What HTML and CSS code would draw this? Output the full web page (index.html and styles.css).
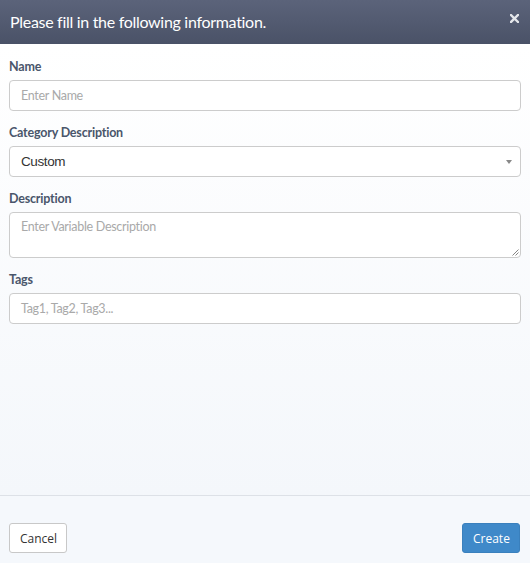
FILE: index.html
```html
<!DOCTYPE html>
<html>
<head>
<meta charset="utf-8">
<link rel="stylesheet" href="styles.css">
</head>
<body>
<div class="modal">
  <div class="header">
    <span class="title">Please fill in the following information.</span>
    <svg class="close" width="9" height="9" viewBox="0 0 9 9"><path d="M1 1L8 8M8 1L1 8" stroke="#e4e6ea" stroke-width="2.4" stroke-linecap="square"/></svg>
  </div>
  <div class="content">
    <div class="group">
      <div class="label">Name</div>
      <div class="input placeholder">Enter Name</div>
    </div>
    <div class="group">
      <div class="label">Category Description</div>
      <div class="input select"><span>Custom</span><span class="caret"></span></div>
    </div>
    <div class="group">
      <div class="label">Description</div>
      <div class="input textarea placeholder">Enter Variable Description
        <svg class="grip" width="8" height="8" viewBox="0 0 8 8"><path d="M7.5 1.5L1.5 7.5M7.5 4.5L4.5 7.5" stroke="#777" stroke-width="0.9"/></svg>
      </div>
    </div>
    <div class="group">
      <div class="label">Tags</div>
      <div class="input placeholder">Tag1, Tag2, Tag3...</div>
    </div>
  </div>
  <div class="footer">
    <button class="btn cancel">Cancel</button>
    <button class="btn create">Create</button>
  </div>
</div>
</body>
</html>
```
FILE: styles.css
```css
html, body {
  margin: 0;
  height: 100%;
}
body {
  font-family: "Lato", "Open Sans", sans-serif;
}
.modal {
  height: 100%;
  display: flex;
  flex-direction: column;
}
.header {
  height: 44px;
  flex: none;
  box-sizing: border-box;
  padding: 0 11px 0 10px;
  display: flex;
  align-items: center;
  justify-content: space-between;
  background: linear-gradient(#5b637a, #4a5267);
}
.title {
  color: #fff;
  font-size: 16px;
  letter-spacing: -0.3px;
  position: relative;
  top: -1px;
}
.close {
  position: relative;
  top: -4px;
}
.content {
  flex: 1;
  padding: 16px 9px 0 9px;
  background: linear-gradient(#ffffff, #f4f7fb);
}
.group {
  margin-bottom: 15px;
}
.label {
  font-size: 12.5px;
  letter-spacing: -0.2px;
  line-height: 16px;
  font-weight: bold;
  color: #4a566b;
  margin-bottom: 4px;
  position: relative;
  top: -1px;
}
.input {
  box-sizing: border-box;
  height: 31px;
  border: 1px solid #cccccc;
  border-radius: 4px;
  background: #fff;
  padding: 0 11px;
  display: flex;
  align-items: center;
  font-size: 12.5px;
  letter-spacing: -0.3px;
}
.placeholder {
  color: #a9a9a9;
}
.select {
  font-family: "Liberation Sans", Arial, sans-serif;
  font-size: 13.5px;
  letter-spacing: -0.4px;
  color: #333;
  justify-content: space-between;
  padding-right: 8px;
}
.caret {
  width: 0;
  height: 0;
  border-left: 3px solid transparent;
  border-right: 3px solid transparent;
  border-top: 4px solid #888;
  margin-top: 1px;
}
.textarea {
  height: 46px;
  align-items: flex-start;
  padding-top: 6px;
  position: relative;
}
.grip {
  position: absolute;
  right: 1px;
  bottom: 1px;
}
.footer {
  flex: none;
  height: 68px;
  box-sizing: border-box;
  border-top: 1px solid #dde1e7;
  background: #f5f8fc;
  padding: 27px 9px 0 9px;
  display: flex;
  justify-content: space-between;
  align-items: flex-start;
}
.btn {
  height: 30px;
  box-sizing: border-box;
  border-radius: 3px;
  font-family: "Open Sans", sans-serif;
  font-size: 12px;
  padding: 0 10px;
}
.cancel {
  width: 58px;
  background: #fff;
  border: 1px solid #c8c8c8;
  color: #333;
}
.create {
  width: 58px;
  margin-right: 1px;
  background: #3f89c9;
  border: 1px solid #3a80bd;
  color: #fff;
}
```
